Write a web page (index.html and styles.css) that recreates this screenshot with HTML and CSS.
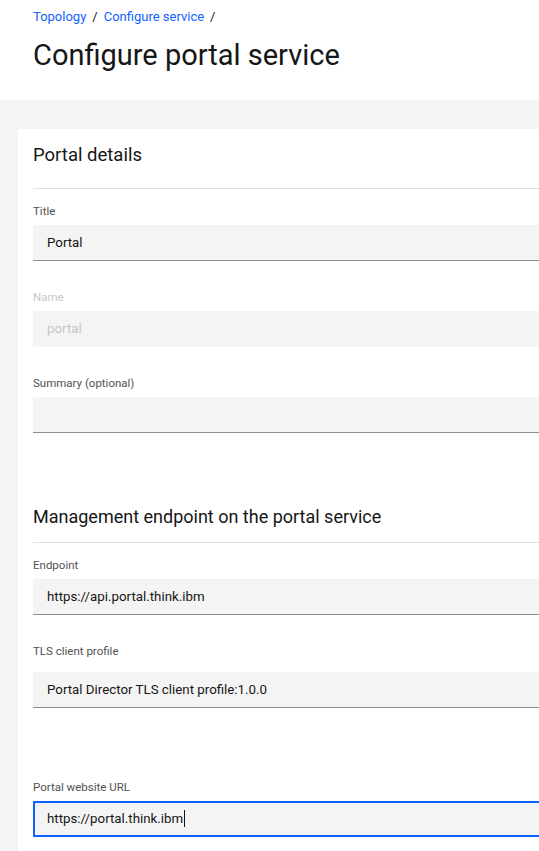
FILE: index.html
```html
<!DOCTYPE html>
<html lang="en">
<head>
<meta charset="utf-8">
<title>Configure portal service</title>
<link rel="stylesheet" href="styles.css">
</head>
<body>
<header class="page-header">
  <nav class="breadcrumb">
    <a class="crumb" href="#">Topology</a><span class="sep">/</span><a class="crumb" href="#">Configure service</a><span class="sep">/</span>
  </nav>
  <h1 class="page-title">Configure portal service</h1>
</header>
<main class="content">
  <section class="card">
    <h2 class="section-title first">Portal details</h2>
    <div class="field">
      <div class="label">Title</div>
      <div class="input">Portal</div>
    </div>
    <div class="field disabled">
      <div class="label">Name</div>
      <div class="input">portal</div>
    </div>
    <div class="field">
      <div class="label">Summary (optional)</div>
      <div class="input"></div>
    </div>

    <h2 class="section-title second">Management endpoint on the portal service</h2>
    <div class="field">
      <div class="label">Endpoint</div>
      <div class="input">https://api.portal.think.ibm</div>
    </div>
    <div class="field select">
      <div class="label">TLS client profile</div>
      <div class="input">Portal Director TLS client profile:1.0.0</div>
    </div>
    <div class="field url">
      <div class="label">Portal website URL</div>
      <div class="input focused">https://portal.think.ibm<span class="caret"></span></div>
    </div>
  </section>
</main>
</body>
</html>
```

FILE: styles.css
```css
html, body {
  margin: 0;
  padding: 0;
}
body {
  font-family: Roboto, "Noto Sans", sans-serif;
  color: #161616;
  background: #f4f4f4;
  overflow: hidden;
  width: 539px;
  height: 851px;
}
.page-header {
  background: #ffffff;
  padding: 7px 33px 26px;
  height: 67px;
}
.breadcrumb {
  font-size: 13px;
  line-height: 20px;
  height: 20px;
  white-space: nowrap;
}
.crumb {
  color: #0f62fe;
  text-decoration: none;
}
.sep {
  color: #161616;
  margin: 0 6px;
}
.page-title {
  margin: 8px 0 0;
  font-size: 29px;
  font-weight: 400;
  line-height: 40px;
  white-space: nowrap;
}
.content {
  padding: 29px 0 0 18px;
}
.card {
  background: #ffffff;
  width: 640px;
  padding: 12px 0 40px 15px;
  min-height: 800px;
}
.section-title {
  margin: 0;
  font-weight: 400;
  color: #161616;
  border-bottom: 1px solid #e0e0e0;
  white-space: nowrap;
}
.section-title.first {
  font-size: 18.5px;
  line-height: 28px;
  padding-bottom: 19px;
  margin-bottom: 14px;
}
.section-title.second {
  font-size: 18px;
  line-height: 24px;
  padding-bottom: 13px;
  margin-top: 72px;
  margin-bottom: 14px;
}
.field {
  margin-bottom: 28px;
}
.label {
  font-size: 11.5px;
  line-height: 16px;
  color: #525252;
  margin-bottom: 6px;
}
.input {
  height: 36px;
  box-sizing: border-box;
  background: #f4f4f4;
  border-bottom: 1px solid #8d8d8d;
  padding: 0 14px;
  font-size: 13.3px;
  line-height: 35px;
  color: #161616;
  white-space: nowrap;
}
.disabled .label,
.disabled .input {
  color: #c6c6c6;
}
.disabled .input {
  border-bottom-color: transparent;
}
.select .label {
  margin-bottom: 13px;
}
.select {
  margin-bottom: 71px;
}
.input.focused {
  border: 2px solid #0f62fe;
  border-right: none;
  line-height: 31px;
  padding-left: 12px;
}
.caret {
  display: inline-block;
  width: 1px;
  height: 17px;
  background: #161616;
  vertical-align: -4px;
  margin-left: 1px;
}
```
